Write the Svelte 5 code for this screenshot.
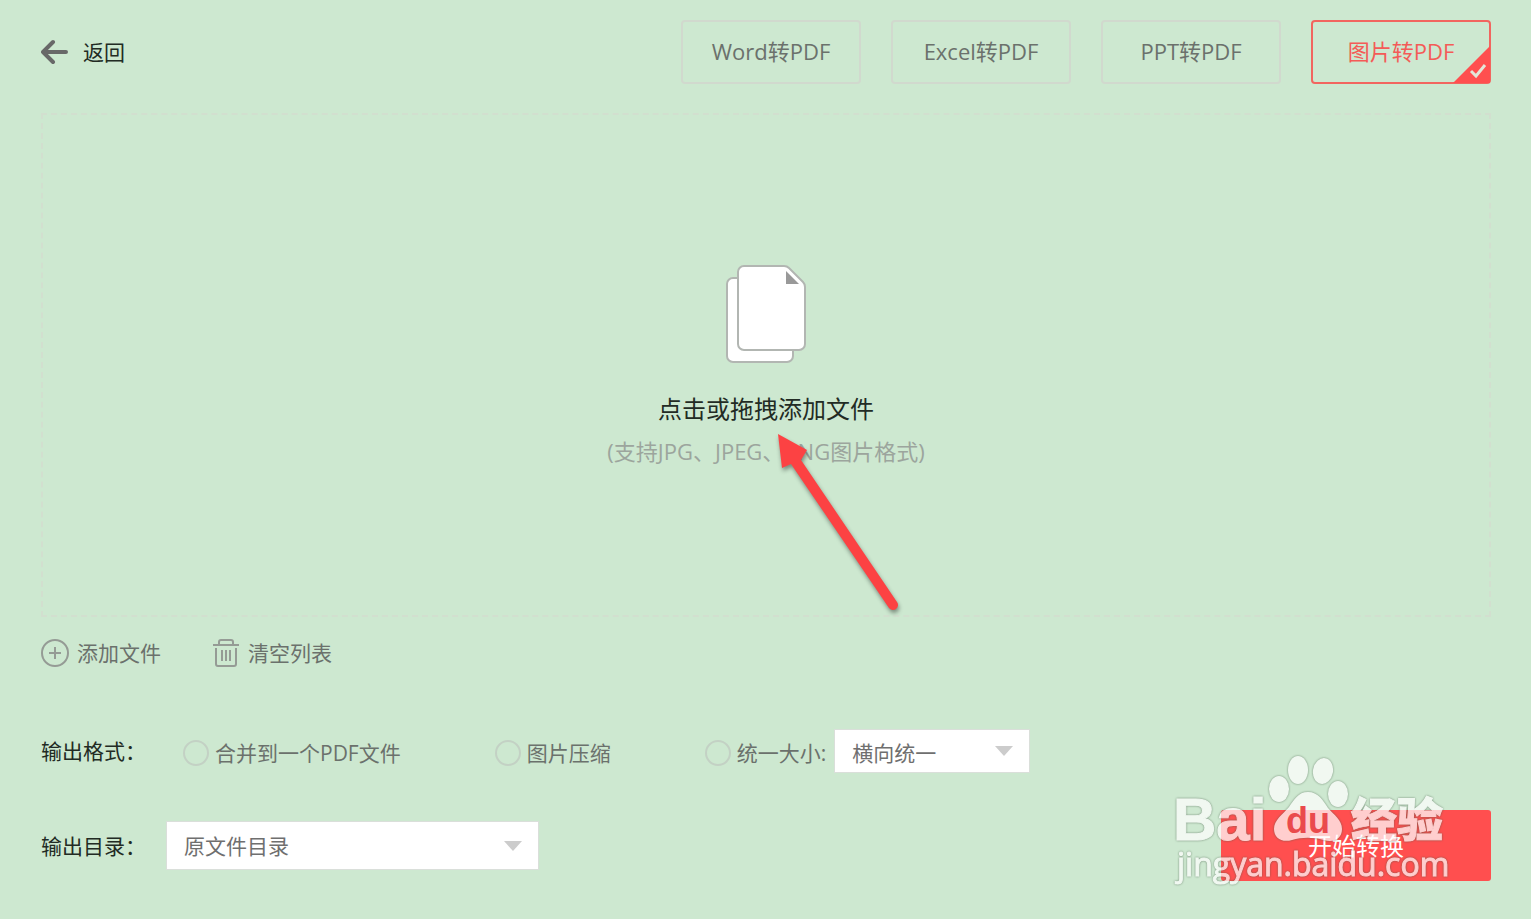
<script>
  const tabs = ['Word转PDF', 'Excel转PDF', 'PPT转PDF', '图片转PDF']

  let active = $state('图片转PDF')
  let mode = $state('')
  let direction = $state('横向统一')
  let folder = $state('原文件目录')
</script>

<div class="page">
  <header>
    <button class="back">
      <svg width="28" height="26" viewBox="0 0 28 26" fill="none" stroke="#686868" stroke-width="4" stroke-linecap="round" stroke-linejoin="round">
        <path d="M25 13H2M12 3L2 13l10 10" />
      </svg>
      返回
    </button>
    <nav class="tabs">
      {#each tabs as tab}
        <button class="tab" class:active={active === tab} onclick={() => active = tab}>
          {tab}
          {#if active === tab}
            <svg class="corner" width="37" height="37" viewBox="0 0 37 37">
              <path d="M37 0V37H0Z" fill="#ff4f4f" />
              <path d="M18 25l5 5 9-11" fill="none" stroke="#e3e6d8" stroke-width="3" />
            </svg>
          {/if}
        </button>
      {/each}
    </nav>
  </header>

  <button class="drop">
    <span class="drop-inner">
      <svg width="82" height="100" viewBox="0 0 82 100" fill="#fff" stroke="#b2b6b2" stroke-width="2">
        <rect x="2" y="14" width="66" height="84" rx="6" />
        <path d="M19 2H59Q62 2 64 4L78 18Q80 20 80 23V80a6 6 0 0 1-6 6H19a6 6 0 0 1-6-6V8a6 6 0 0 1 6-6Z" />
        <path d="M61 7V20H74Z" fill="#999" stroke="none" />
      </svg>
      <span class="drop-title">点击或拖拽添加文件</span>
      <span class="drop-hint">(支持JPG、JPEG、PNG图片格式)</span>
      <svg class="pointer" width="140" height="196" viewBox="0 0 140 196">
        <path d="M8 8L37 24 31 34 127 176A5 5 0 0 1 119 182L21 38 12 42Z" fill="#fc4243" />
      </svg>
    </span>
  </button>

  <div class="tools">
    <button>
      <svg width="28" height="28" viewBox="0 0 28 28" fill="none" stroke="#959b95" stroke-width="2">
        <circle cx="14" cy="14" r="13" />
        <path d="M14 8V20M8 14H20" />
      </svg>
      添加文件
    </button>
    <button>
      <svg width="28" height="28" viewBox="0 0 28 28" fill="none" stroke="#959b95" stroke-width="2">
        <path d="M1 6H27M7 6V3a2 2 0 0 1 2-2H19a2 2 0 0 1 2 2V6M4 9V25a2 2 0 0 0 2 2H22a2 2 0 0 0 2-2V9M10 11V22M14 11V22M18 11V22" />
      </svg>
      清空列表
    </button>
  </div>

  <div class="row format">
    <span class="label">输出格式：</span>
    <div class="choices">
      <label><input type="radio" value="merge" bind:group={mode} />合并到一个PDF文件</label>
      <label><input type="radio" value="compress" bind:group={mode} />图片压缩</label>
      <div class="resize">
        <label><input type="radio" value="resize" bind:group={mode} />统一大小:</label>
        <div class="select small">
          <select bind:value={direction} aria-label="统一大小">
            <option>横向统一</option>
            <option>纵向统一</option>
          </select>
        </div>
      </div>
    </div>
  </div>

  <div class="row output">
    <label class="label" for="folder">输出目录：</label>
    <div class="select">
      <select id="folder" bind:value={folder}>
        <option>原文件目录</option>
        <option>自定义目录</option>
      </select>
    </div>
    <button class="start">开始转换</button>
  </div>

  <svg class="watermark" width="290" height="140" viewBox="0 0 290 140">
    <g class="mark">
      <text class="latin" x="3" y="90">Bai</text>
      <ellipse cx="109" cy="39" rx="10" ry="13" />
      <ellipse cx="128" cy="20" rx="10" ry="14" />
      <ellipse cx="153" cy="21" rx="10" ry="13" transform="rotate(10 153 21)" />
      <ellipse cx="168" cy="44" rx="10" ry="13" />
      <path d="M138 42C148 42 153 50 158 58C164 65 172 70 172 79C172 89 163 93 154 90C143 87 132 87 122 90C112 93 104 88 104 79C104 70 113 64 119 57C124 50 128 42 138 42Z" />
      <text class="cjk" x="181" y="86">经验</text>
      <text class="url" x="7" y="126">jingyan.baidu.com</text>
    </g>
    <text class="du" x="116" y="83">du</text>
  </svg>
</div>

<style>
  :global(*, *::before, *::after) {
    box-sizing: border-box;
  }

  :global(body) {
    margin: 0;
    background: #cde8d0;
  }

  .page {
    position: relative;
    display: flex;
    flex-direction: column;
    min-height: 100vh;
    padding: 20px 40px 38px 41px;
    font-family: 'Open Sans', 'Noto Sans CJK SC', sans-serif;
    font-size: 21px;
    line-height: 32px;
    color: #6b716c;
  }

  button,
  select {
    font: inherit;
    color: inherit;
    background: none;
    border: none;
    padding: 0;
    margin: 0;
    cursor: pointer;
  }

  svg {
    display: block;
    flex-shrink: 0;
  }

  header {
    display: flex;
    justify-content: space-between;
    align-items: center;
  }

  .back {
    display: flex;
    align-items: center;
    gap: 14px;
    color: #222b24;
  }

  .tabs {
    display: flex;
    gap: 30px;
  }

  .tab {
    position: relative;
    width: 180px;
    height: 64px;
    padding-bottom: 3px;
    border: 2px solid #d1d9ce;
    border-radius: 4px;
    font-size: 22px;
  }

  .tab.active {
    border-color: #f2655f;
    color: #f45b57;
  }

  .corner {
    position: absolute;
    right: -1px;
    bottom: -1px;
  }

  .drop {
    flex: 1;
    margin-top: 29px;
    padding: 24px;
    border: 2px dashed #d2dfcf;
    display: flex;
    align-items: center;
    justify-content: center;
  }

  .drop-inner {
    position: relative;
    display: flex;
    flex-direction: column;
    align-items: center;
  }

  .drop-title {
    margin-top: 27px;
    font-size: 24px;
    line-height: 36px;
    color: #222b24;
  }

  .drop-hint {
    margin-top: 8px;
    font-size: 22px;
    color: #9ca59d;
  }

  /* callout arrow laid over the hint */
  .pointer {
    position: absolute;
    left: calc(50% + 4px);
    top: 162px;
    pointer-events: none;
    filter: drop-shadow(1px 3px 2px rgba(0, 0, 0, 0.4));
  }

  .tools {
    display: flex;
    gap: 51px;
    margin-top: 20px;
  }

  .tools button {
    display: flex;
    align-items: center;
    gap: 8px;
  }

  .row {
    display: flex;
    align-items: center;
  }

  .label {
    width: 125px;
    color: #222b24;
    white-space: nowrap;
  }

  .format {
    margin-top: 60px;
  }

  .choices {
    display: flex;
    align-items: center;
    gap: 94px;
    padding-left: 17px;
  }

  .choices label {
    display: flex;
    align-items: center;
    gap: 6px;
    padding-top: 4px;
    white-space: nowrap;
  }

  input[type='radio'] {
    appearance: none;
    width: 26px;
    height: 26px;
    margin: 0;
    border: 2px solid #c3d1c4;
    border-radius: 50%;
  }

  input[type='radio']:checked {
    border: 7px solid #ff4f4f;
  }

  .resize {
    display: flex;
    align-items: center;
    gap: 8px;
  }

  .select {
    position: relative;
    width: 373px;
  }

  .select::after {
    content: '';
    position: absolute;
    right: 17px;
    top: 50%;
    margin-top: -5px;
    border: 9px solid transparent;
    border-top: 10px solid #ccc;
    border-bottom: none;
    pointer-events: none;
  }

  .select select {
    appearance: none;
    width: 100%;
    height: 49px;
    padding: 0 17px;
    border: 1px solid #dadfda;
    border-radius: 0;
    background: #fff;
    color: #6f6f6f;
  }

  .select.small {
    width: 196px;
  }

  .select.small select {
    height: 44px;
    padding-top: 4px;
  }

  .output {
    margin-top: 37px;
  }

  .start {
    width: 270px;
    height: 71px;
    margin-left: auto;
    border-radius: 3px;
    background: #ff4f4f;
    color: #fff;
    font-size: 24px;
  }

  .watermark {
    position: absolute;
    right: 71px;
    bottom: 29px;
    pointer-events: none;
  }

  .mark {
    fill: #fff;
    opacity: 0.72;
    filter: drop-shadow(0 0 1px rgba(70, 90, 70, 0.9));
  }

  .latin {
    font: bold 60px 'Liberation Sans', sans-serif;
    stroke: #fff;
    stroke-width: 1px;
  }

  .cjk {
    font: 900 46px 'Noto Sans CJK SC', sans-serif;
    stroke: #fff;
    stroke-width: 1px;
  }

  .url {
    font: 32px 'Open Sans', sans-serif;
    stroke: #fff;
    stroke-width: 1px;
  }

  .du {
    font: bold 36px 'Liberation Sans', sans-serif;
    fill: #ea4a4c;
  }
</style>
